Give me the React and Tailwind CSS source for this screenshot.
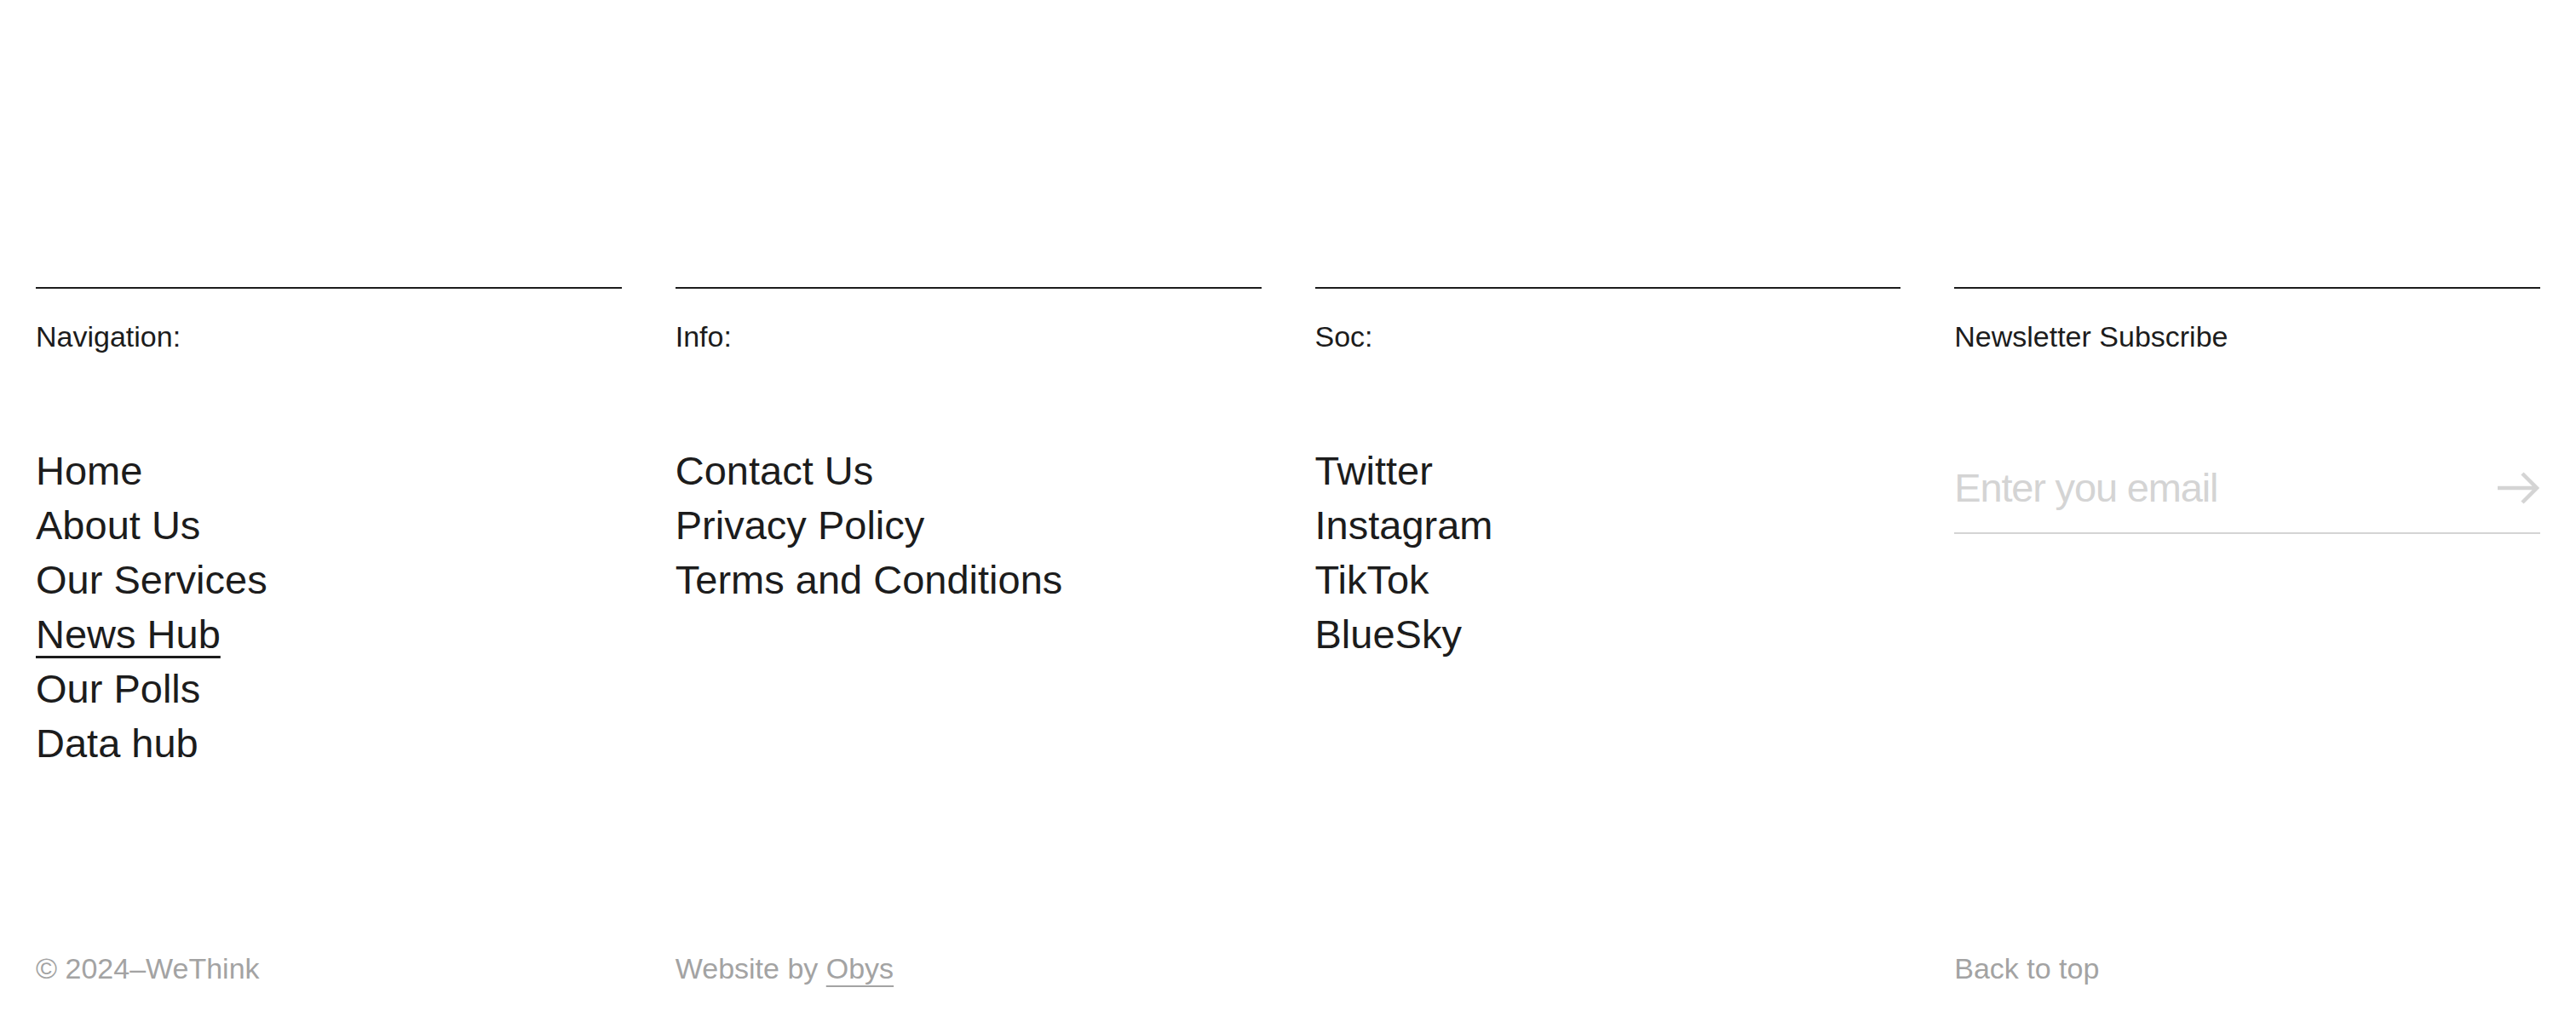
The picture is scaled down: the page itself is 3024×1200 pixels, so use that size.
const columns = [
  {
    title: 'Navigation:',
    links: ['Home', 'About Us', 'Our Services', 'News Hub', 'Our Polls', 'Data hub'],
    active: 'News Hub',
  },
  {
    title: 'Info:',
    links: ['Contact Us', 'Privacy Policy', 'Terms and Conditions'],
  },
  {
    title: 'Soc:',
    links: ['Twitter', 'Instagram', 'TikTok', 'BlueSky'],
  },
]

function ArrowIcon() {
  return (
    <svg width="50" height="40" viewBox="0 0 50 40" fill="none" stroke="#d4d4d4" strokeWidth="4.5">
      <path d="M0 20H46M29 3L46 20L29 37" />
    </svg>
  )
}

export default function App() {
  return (
    <footer className="min-h-[1200px] bg-white px-[42px] pt-[337px] font-['Liberation_Sans',Arial,sans-serif] text-[#1c1c1c]">
      <div className="grid grid-cols-4 gap-x-[63px]">
        {columns.map((col) => (
          <div key={col.title} className="border-t-2 border-[#1c1c1c]">
            <p className="mt-[38px] text-[34px] leading-[37px]">{col.title}</p>
            <ul className="mt-[107px]">
              {col.links.map((link) => (
                <li key={link} className="text-[47px] leading-[64px]">
                  <a
                    href="#"
                    className={
                      link === col.active
                        ? 'underline decoration-[3px] underline-offset-[9px]'
                        : ''
                    }
                  >
                    {link}
                  </a>
                </li>
              ))}
            </ul>
          </div>
        ))}

        {/* Newsletter */}
        <div className="border-t-2 border-[#1c1c1c]">
          <p className="mt-[38px] text-[34px] leading-[37px]">Newsletter Subscribe</p>
          <form className="mt-[127px] flex items-center border-b-2 border-[#d4d4d4] pb-[20px]">
            <input
              type="email"
              placeholder="Enter you email"
              className="h-[64px] flex-1 bg-transparent text-[47px] tracking-[-0.025em] text-[#1c1c1c] placeholder:text-[#d4d4d4] focus:outline-none"
            />
            <button type="button" aria-label="Subscribe" className="shrink-0">
              <ArrowIcon />
            </button>
          </form>
        </div>
      </div>

      {/* Bottom row */}
      <div className="mt-[212px] grid grid-cols-4 gap-x-[63px] text-[34px] leading-[41px] text-[#a3a3a3]">
        <p>© 2024–WeThink</p>
        <p>
          Website by{' '}
          <a href="#" className="underline decoration-2 underline-offset-[8px]">
            Obys
          </a>
        </p>
        <div />
        <a href="#">Back to top</a>
      </div>
    </footer>
  )
}
